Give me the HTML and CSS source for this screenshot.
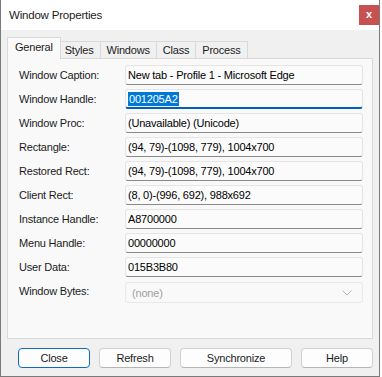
FILE: index.html
```html
<!DOCTYPE html>
<html lang="en">
<head>
    <meta charset="UTF-8">
    <title>Window Properties</title>
    <link rel="stylesheet" href="styles.css">
</head>
<body>
    <div class="window">
        <div class="titlebar">
            <span class="title">Window Properties</span>
            <span class="close-x">x</span>
        </div>

        <div class="tabs">
            <div class="tab active">General</div>
            <div class="tab">Styles</div>
            <div class="tab">Windows</div>
            <div class="tab">Class</div>
            <div class="tab">Process</div>
        </div>

        <div class="panel">
            <div class="row">
                <span class="label">Window Caption:</span>
                <span class="field">New tab - Profile 1 - Microsoft Edge</span>
            </div>
            <div class="row">
                <span class="label">Window Handle:</span>
                <span class="field focused"><span class="selected">001205A2</span></span>
            </div>
            <div class="row">
                <span class="label">Window Proc:</span>
                <span class="field">(Unavailable) (Unicode)</span>
            </div>
            <div class="row">
                <span class="label">Rectangle:</span>
                <span class="field">(94, 79)-(1098, 779), 1004x700</span>
            </div>
            <div class="row">
                <span class="label">Restored Rect:</span>
                <span class="field">(94, 79)-(1098, 779), 1004x700</span>
            </div>
            <div class="row">
                <span class="label">Client Rect:</span>
                <span class="field">(8, 0)-(996, 692), 988x692</span>
            </div>
            <div class="row">
                <span class="label">Instance Handle:</span>
                <span class="field">A8700000</span>
            </div>
            <div class="row">
                <span class="label">Menu Handle:</span>
                <span class="field">00000000</span>
            </div>
            <div class="row">
                <span class="label">User Data:</span>
                <span class="field">015B3B80</span>
            </div>
            <div class="row">
                <span class="label">Window Bytes:</span>
                <span class="combo">
                    <span>(none)</span>
                    <svg width="10" height="6" viewBox="0 0 10 6"><path d="M0.5 0.5 L5 5 L9.5 0.5" fill="none" stroke="#b4b4b4" stroke-width="1"/></svg>
                </span>
            </div>
        </div>

        <div class="buttons">
            <button class="btn default">Close</button>
            <button class="btn">Refresh</button>
            <button class="btn wide">Synchronize</button>
            <button class="btn">Help</button>
        </div>
    </div>
</body>
</html>
```

FILE: styles.css
```css
body {
    margin: 0;
    background: #ffffff;
    font-family: "Liberation Sans", Arial, sans-serif;
    font-size: 11px;
    letter-spacing: -0.2px;
    color: #1b1b1b;
}
.window {
    width: 380px;
    height: 377px;
    box-sizing: border-box;
    background: #f0f0f0;
    border: 1px solid #7a7a7a;
    border-top: none;
}
.titlebar {
    height: 30px;
    background: #ffffff;
    display: flex;
    align-items: center;
    padding-left: 8px;
}
.title {
    font-size: 11.5px;
    color: #1b1b1b;
}
.close-x {
    margin-left: auto;
    width: 20px;
    height: 20px;
    background: #c75050;
    color: #ffffff;
    font-weight: bold;
    font-size: 11px;
    display: flex;
    align-items: center;
    justify-content: center;
    line-height: 1;
    padding-bottom: 2px;
    box-sizing: border-box;
}
.tabs {
    display: flex;
    align-items: flex-end;
    margin-top: 7px;
    padding-left: 8px;
    height: 21px;
}
.tab {
    height: 17px;
    box-sizing: border-box;
    border: 1px solid #d9d9d9;
    border-bottom: none;
    margin-left: -1px;
    padding: 2px 6px 0;
    background: #f0f0f0;
    position: relative;
}
.tab:first-child {
    margin-left: 0;
}
.tab.active {
    height: 22px;
    margin: 0 -2px -1px -2px;
    padding: 3px 7px 0;
    background: #f9f9f9;
    z-index: 1;
}
.panel {
    margin: 0 6px;
    height: 281px;
    box-sizing: border-box;
    background: #f9f9f9;
    border: 1px solid #d9d9d9;
    padding: 6px 9px 0 11px;
    display: flex;
    flex-direction: column;
    gap: 4px;
}
.row {
    display: flex;
    align-items: center;
    height: 20px;
}
.label {
    width: 106px;
}
.field {
    flex: 1;
    height: 20px;
    box-sizing: border-box;
    background: #fbfbfb;
    border: 1px solid #e5e5e5;
    border-bottom-color: #8a8a8a;
    border-radius: 3px;
    padding: 0 2px;
    display: flex;
    align-items: center;
    color: #000000;
    white-space: nowrap;
}
.field.focused {
    border-bottom: 2px solid #005fb8;
    padding-top: 1px;
}
.selected {
    background: #0078d7;
    color: #ffffff;
    padding: 1px;
}
.combo {
    flex: 1;
    height: 21px;
    box-sizing: border-box;
    background: #f9f9f9;
    border: 1px solid #e8e8e8;
    border-radius: 3px;
    padding: 0 10px 0 6px;
    display: flex;
    align-items: center;
    justify-content: space-between;
    color: #a0a0a0;
    margin-top: 3px;
}
.buttons {
    display: flex;
    gap: 9px;
    padding-left: 17px;
    margin-top: 9px;
}
.btn {
    width: 72px;
    height: 20px;
    font-family: inherit;
    font-size: 11px;
    letter-spacing: -0.2px;
    color: #1b1b1b;
    background: #fdfdfd;
    border: 1px solid #d0d0d0;
    border-bottom-color: #b5b5b5;
    border-radius: 4px;
    padding: 0;
}
.btn.wide {
    width: 112px;
}
.btn.default {
    border-color: #0f6cbd;
}
```
